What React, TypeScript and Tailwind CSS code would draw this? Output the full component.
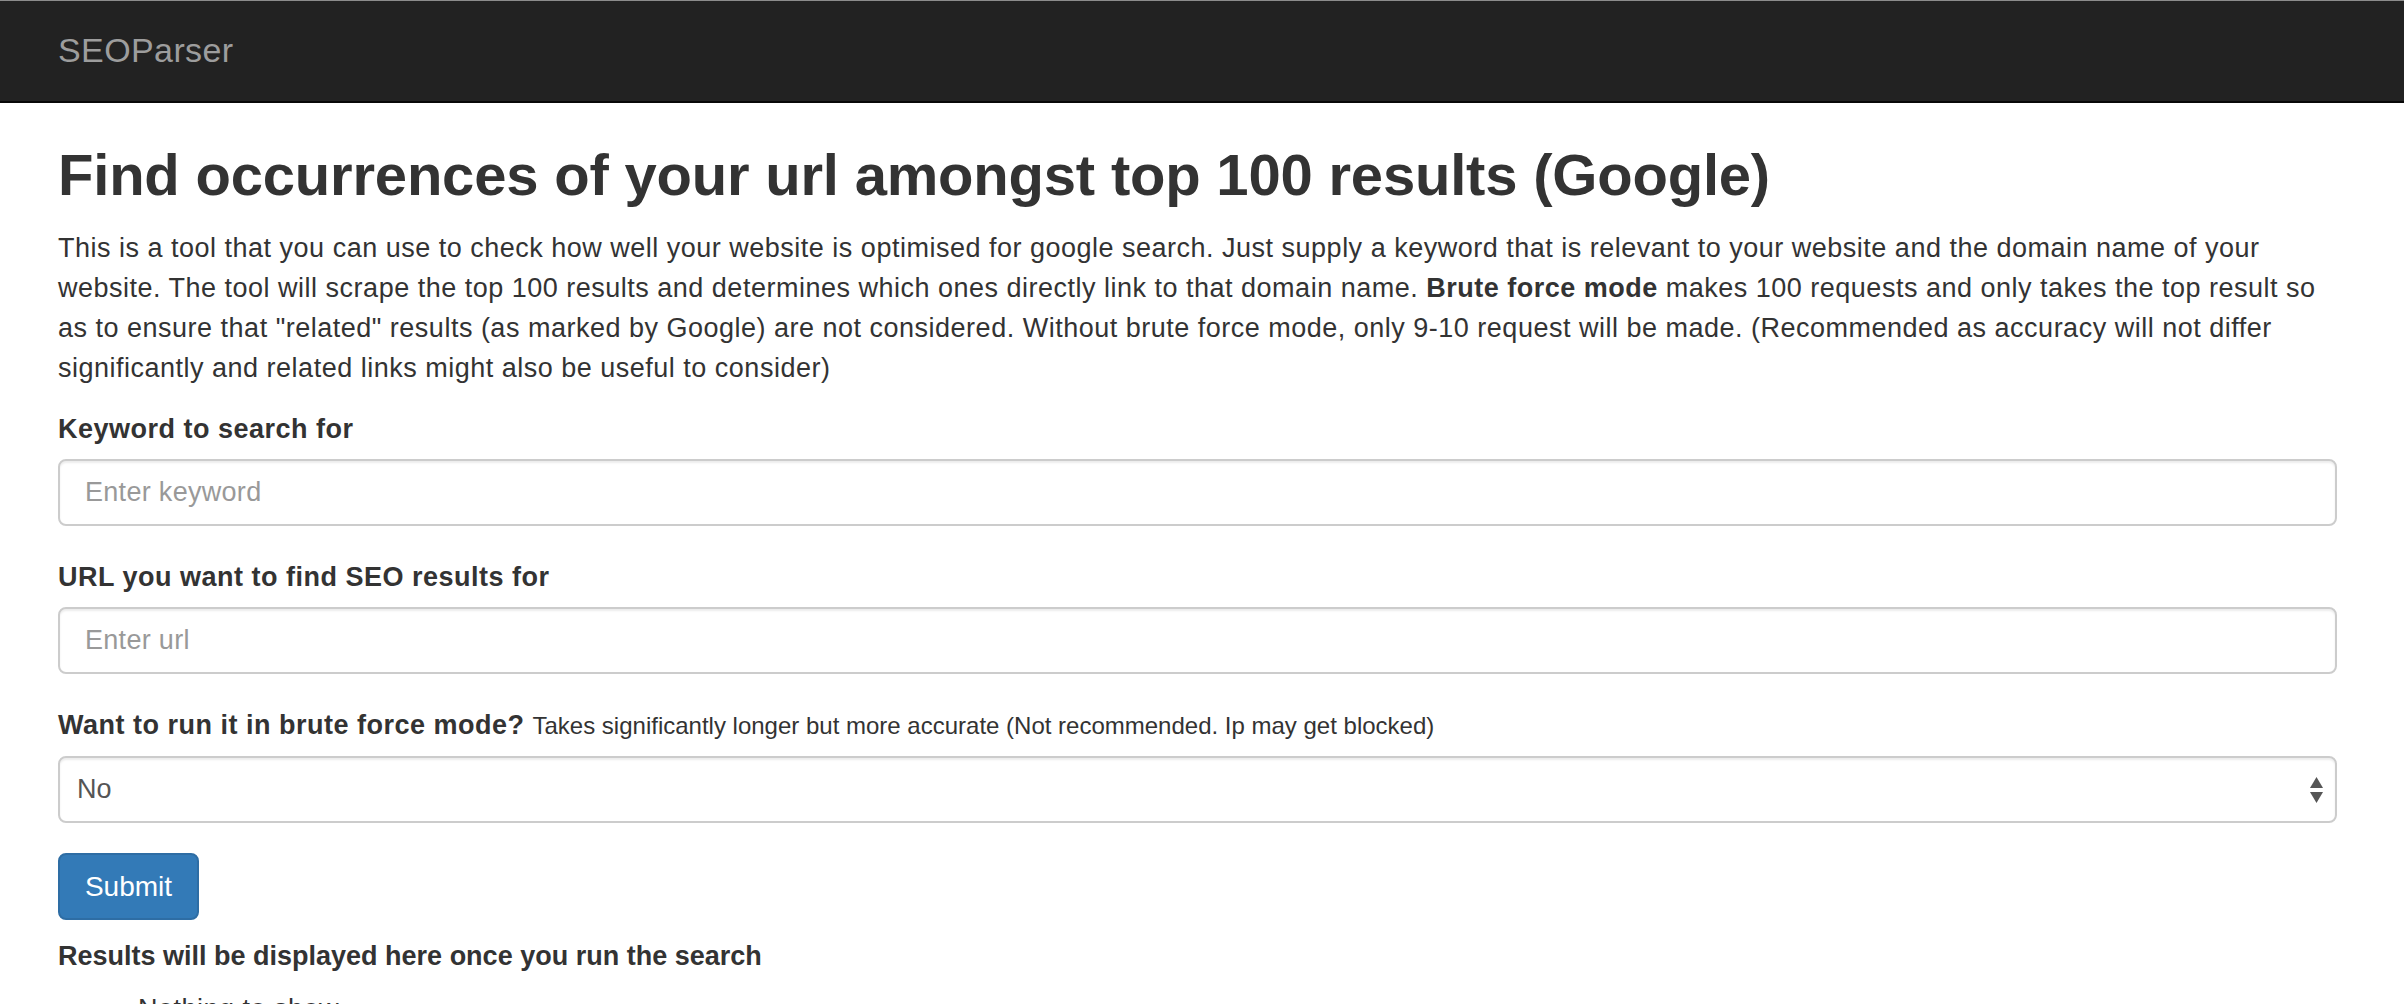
import React, { useState } from "react";

const font = "font-['Liberation_Sans',Arial,sans-serif]";

const inputCls =
  "block w-full h-[67px] rounded-[8px] border-2 border-[#ccc] px-[25px] text-[27px] tracking-[0.3px] text-[#555] placeholder:text-[#999] shadow-[inset_0_2px_2px_rgba(0,0,0,0.075)] outline-none";

function SelectArrows() {
  return (
    <svg width="13" height="26" viewBox="0 0 13 26" className="pointer-events-none absolute right-[14px] top-1/2 -translate-y-1/2">
      <polygon points="6.5,0 13,11 0,11" fill="#555" />
      <polygon points="0,15 13,15 6.5,26" fill="#555" />
    </svg>
  );
}

export default function App() {
  const [keyword, setKeyword] = useState("");
  const [url, setUrl] = useState("");
  const [brute, setBrute] = useState("No");

  return (
    <div className={`min-h-screen bg-white text-[#333] ${font}`}>
      <nav className="h-[103px] border-t border-t-[#8c8c8c] border-b-2 border-b-[#080808] bg-[#222] flex items-center pl-[58px]">
        <span className="text-[34px] leading-none tracking-[0.4px] text-[#9d9d9d] -mt-[2px]">SEOParser</span>
      </nav>

      <main className="pl-[58px] pr-[67px]">
        <h1 className="mt-[40px] text-[58px] leading-[64px] font-bold tracking-[-0.2px]">
          Find occurrences of your url amongst top 100 results (Google)
        </h1>
        <p className="mt-[21px] text-[27px] leading-[40px] tracking-[0.5px]">
          This is a tool that you can use to check how well your website is optimised for google search. Just supply a keyword that is relevant to your website and the domain name of your website. The tool will scrape the top 100 results and determines which ones directly link to that domain name. <b>Brute force mode</b> makes 100 requests and only takes the top result so as to ensure that "related" results (as marked by Google) are not considered. Without brute force mode, only 9-10 request will be made. (Recommended as accuracy will not differ significantly and related links might also be useful to consider)
        </p>

        <form className="mt-[21px]" onSubmit={(e) => e.preventDefault()}>
          <div className="mb-[31px]">
            <label className="block text-[27px] leading-[40px] font-bold tracking-[0.5px] mb-[10px]">Keyword to search for</label>
            <input className={inputCls} placeholder="Enter keyword" value={keyword} onChange={(e) => setKeyword(e.target.value)} />
          </div>
          <div className="mb-[31px]">
            <label className="block text-[27px] leading-[40px] font-bold tracking-[0.5px] mb-[10px]">URL you want to find SEO results for</label>
            <input className={inputCls} placeholder="Enter url" value={url} onChange={(e) => setUrl(e.target.value)} />
          </div>
          <div className="mb-[30px]">
            <label className="block text-[27px] leading-[40px] tracking-[0.5px] mb-[10px]">
              <b>Want to run it in brute force mode?</b>{" "}
              <span className="text-[24px] tracking-normal">Takes significantly longer but more accurate (Not recommended. Ip may get blocked)</span>
            </label>
            <div className="relative">
              <select
                className="block w-full h-[67px] appearance-none rounded-[8px] border-2 border-[#ccc] bg-white pl-[17px] text-[27px] text-[#555] shadow-[inset_0_2px_2px_rgba(0,0,0,0.075)] outline-none"
                value={brute}
                onChange={(e) => setBrute(e.target.value)}
              >
                <option>No</option>
                <option>Yes</option>
              </select>
              <SelectArrows />
            </div>
          </div>
          <button
            type="submit"
            className="h-[67px] w-[141px] rounded-[8px] border-2 border-[#2e6da4] bg-[#337ab7] text-[28px] text-white"
          >
            Submit
          </button>
        </form>

        <h4 className="mt-[16px] text-[27px] leading-[40px] font-semibold tracking-normal">Results will be displayed here once you run the search</h4>
        <ul className="mt-[13px] list-disc pl-[80px] text-[27px] leading-[40px] tracking-[0.5px]">
          <li>Nothing to show</li>
        </ul>
      </main>
    </div>
  );
}
